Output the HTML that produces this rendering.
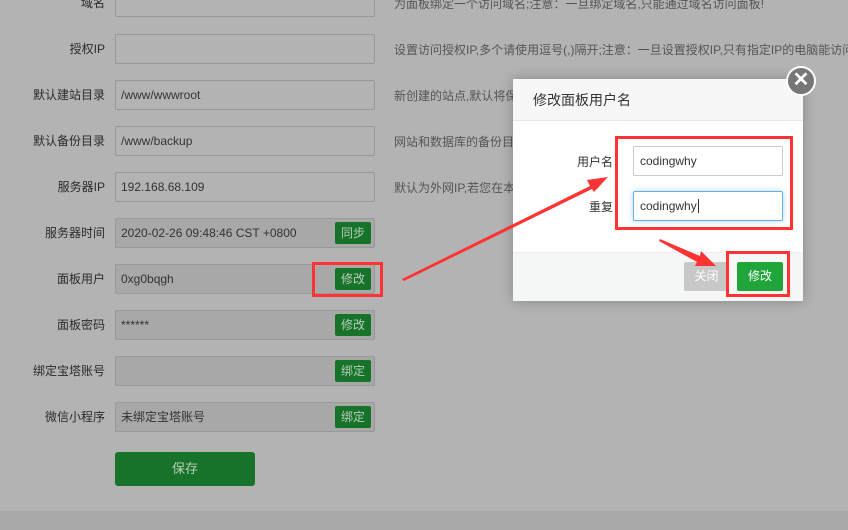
<!DOCTYPE html>
<html><head><meta charset="utf-8"><style>
*{margin:0;padding:0;box-sizing:border-box}
body{width:848px;height:530px;overflow:hidden;background:#b3b3b3;font-family:"Liberation Sans","Noto Sans CJK SC",sans-serif;font-size:12px;color:#333;position:relative}
.lab{position:absolute;right:743px;width:120px;text-align:right;font-size:12px;color:#2a2a2a}
.inp{position:absolute;left:115px;width:260px;height:30px;border:1px solid #999;border-radius:2px;padding-left:5px;line-height:28px;color:#333;font-size:12px}
.dis{background:#a8a8a8}
.gb{position:absolute;right:3px;top:3px;width:36px;height:22px;background:#17732a;color:#b8cdb8;border-radius:2px;text-align:center;line-height:22px;font-size:12px}
.tip{position:absolute;left:394px;color:#555;font-size:12px;white-space:nowrap}
.box{position:absolute;border:3px solid #f33}
</style></head><body>
<div style="position:absolute;left:0;top:511px;width:848px;height:19px;background:#a9a9a9"></div>

<div class="lab" style="top:-6px">域名</div><div class="inp" style="top:-13px"></div><div class="tip" style="top:-5px">为面板绑定一个访问域名;注意：一旦绑定域名,只能通过域名访问面板!</div>
<div class="lab" style="top:40px">授权IP</div><div class="inp" style="top:34px"></div><div class="tip" style="top:41px">设置访问授权IP,多个请使用逗号(,)隔开;注意：一旦设置授权IP,只有指定IP的电脑能访问面板!</div>
<div class="lab" style="top:86px">默认建站目录</div><div class="inp" style="top:80px">/www/wwwroot</div><div class="tip" style="top:87px">新创建的站点,默认将保存到该目录</div>
<div class="lab" style="top:132px">默认备份目录</div><div class="inp" style="top:126px">/www/backup</div><div class="tip" style="top:133px">网站和数据库的备份目录</div>
<div class="lab" style="top:178px">服务器IP</div><div class="inp" style="top:172px">192.168.68.109</div><div class="tip" style="top:179px">默认为外网IP,若您在本地虚拟机测试</div>
<div class="lab" style="top:224px">服务器时间</div><div class="inp dis" style="top:218px">2020-02-26 09:48:46 CST +0800<div class="gb">同步</div></div>
<div class="lab" style="top:270px">面板用户</div><div class="inp dis" style="top:264px">0xg0bqgh<div class="gb">修改</div></div>
<div class="lab" style="top:316px">面板密码</div><div class="inp dis" style="top:310px">******<div class="gb">修改</div></div>
<div class="lab" style="top:362px">绑定宝塔账号</div><div class="inp dis" style="top:356px"><div class="gb">绑定</div></div>
<div class="lab" style="top:408px">微信小程序</div><div class="inp dis" style="top:402px">未绑定宝塔账号<div class="gb">绑定</div></div>
<div style="position:absolute;left:115px;top:452px;width:140px;height:34px;background:#17732a;border-radius:3px;color:#b8cdb8;text-align:center;line-height:34px;font-size:13px">保存</div>

<div style="position:absolute;left:513px;top:79px;width:290px;height:222px;background:#fff;box-shadow:0 0 12px rgba(0,0,0,.25)">
 <div style="height:42px;background:#f7f7f7;border-bottom:1px solid #e8e8e8;padding-left:20px;line-height:42px;font-size:14px;color:#333">修改面板用户名</div>
 <div style="position:absolute;left:0;top:173px;width:290px;height:49px;background:#f5f6f6;border-top:1px solid #eee"></div>
 <div style="position:absolute;right:190px;top:74px;font-size:12px">用户名</div>
 <div style="position:absolute;right:190px;top:119px;font-size:12px">重复</div>
 <div style="position:absolute;left:120px;top:67px;width:150px;height:30px;border:1px solid #ccc;border-radius:2px;padding-left:6px;line-height:28px">codingwhy</div>
 <div style="position:absolute;left:120px;top:112px;width:150px;height:30px;border:1px solid #66afe9;border-radius:2px;padding-left:6px;line-height:28px;box-shadow:0 0 6px rgba(102,175,233,.5)">codingwhy<span style="border-left:1px solid #333;margin-left:1px"></span></div>
 <div style="position:absolute;left:171px;top:183px;width:45px;height:29px;background:#c8c8c8;color:#fff;border-radius:2px;text-align:center;line-height:29px">关闭</div>
 <div style="position:absolute;left:224px;top:183px;width:46px;height:29px;background:#20a53a;color:#fff;border-radius:2px;text-align:center;line-height:29px">修改</div>
</div>
<div style="position:absolute;left:786px;top:66px;width:30px;height:30px;border-radius:50%;background:#777;border:2px solid #fff;color:#fff;text-align:center;line-height:25px;font-size:20px;font-weight:bold">✕</div>

<div class="box" style="left:312px;top:262px;width:71px;height:35px"></div>
<div class="box" style="left:615px;top:136px;width:178px;height:94px"></div>
<div class="box" style="left:726px;top:251px;width:64px;height:46px"></div>
<svg style="position:absolute;left:0;top:0" width="848" height="530">
 <polygon points="402,279 590,186 587,180 608,177 594,192 592,189 404,281" fill="#f33"/>
 <polygon points="660,239 700,256 701,251 716,266 695,266 697,262 659,241" fill="#f33"/>
</svg>
</body></html>
